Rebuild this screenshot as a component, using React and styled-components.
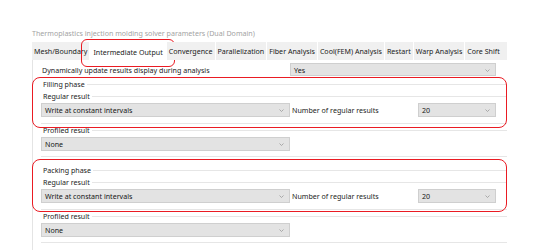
import React from 'react';
import styled, { createGlobalStyle } from 'styled-components';

const GlobalStyle = createGlobalStyle`
  html, body {
    margin: 0;
    background: #ffffff;
  }
  body {
    font-family: "Noto Sans", "Open Sans", sans-serif;
    font-size: 7.1px;
    color: #1c1c1c;
  }
`;

const Page = styled.div`
  width: 475px;
  padding: 27px 0 0 32px;
`;

const Title = styled.div`
  height: 12px;
  line-height: 12px;
  color: #a3a3a3;
  margin-bottom: 3px;
  white-space: nowrap;
`;

const TabBar = styled.div`
  display: flex;
  gap: 1px;
  height: 18px;
  align-items: stretch;
`;

const Tab = styled.div`
  position: relative;
  display: flex;
  align-items: center;
  padding: 0 ${(p) => (p.$active ? 3 : 2)}px;
  margin-top: ${(p) => (p.$active ? 1 : 0)}px;
  background: ${(p) => (p.$active ? '#ffffff' : '#f0f0f0')};
  white-space: nowrap;
  color: #1a1a1a;
  flex: ${(p) => (p.$grow ? 1 : 'none')};

  ${(p) => p.$marked && `
    &::after {
      content: '';
      position: absolute;
      left: -9px;
      right: -9px;
      top: -4px;
      bottom: -7px;
      border: 1.8px solid #ea1b23;
      border-radius: 6px;
      pointer-events: none;
    }
  `}
`;

const Panel = styled.div`
  border-left: 1px solid #e4e4e4;
  padding: 1px 11px 0 8px;
  height: 190px;
`;

const Grid = styled.div`
  display: grid;
  grid-template-columns: 249px 128px 78px;
  align-items: center;
  height: ${(p) => p.$h || 16}px;
`;

const Label = styled.div`
  padding-left: ${(p) => (p.$indent ? 1 : 2)}px;
  white-space: nowrap;
  color: #1c1c1c;
`;

const SelectBox = styled.div`
  position: relative;
  height: ${(p) => p.$h || 14}px;
  box-sizing: border-box;
  border: 1px solid #cfcfcf;
  background: #e3e3e3;
  display: flex;
  align-items: center;
  padding-left: 3px;
  grid-column: ${(p) => p.$span || 'auto'};
  color: #161616;
`;

const Chevron = styled.svg`
  position: absolute;
  right: 5px;
  top: 50%;
  width: 5px;
  height: 3px;
  margin-top: -1px;
`;

const Select = ({ value, span, h }) => (
  <SelectBox $span={span} $h={h}>
    {value}
    <Chevron viewBox="0 0 5 3">
      <path d="M0.5 0.5 L2.5 2.5 L4.5 0.5" fill="none" stroke="#9a9a9a" strokeWidth="0.8" />
    </Chevron>
  </SelectBox>
);

const Section = styled.div`
  position: relative;
`;

const Highlight = styled.div`
  position: absolute;
  left: -9px;
  right: -11px;
  top: ${(p) => p.$top}px;
  height: ${(p) => p.$h}px;
  border: 1.8px solid #ea1b23;
  border-radius: 8px;
  pointer-events: none;
`;

const Legend = styled.div`
  display: flex;
  align-items: center;
  height: 12px;
  white-space: nowrap;
  margin-right: -11px;

  &::after {
    content: '';
    flex: 1;
    border-top: 1px solid #e6e6e6;
    margin-left: 2px;
  }
`;

const FieldRow = styled.div`
  display: grid;
  grid-template-columns: 249px 128px 78px;
  align-items: center;
  padding-top: 1px;
  padding-bottom: ${(p) => p.$pb || 6}px;
  border-bottom: 1px solid #e6e6e6;
  margin-right: -11px;
`;

const Phase = ({ name, markTop, markH }) => (
  <Section>
    <Highlight $top={markTop} $h={markH} />
    <Legend>
      <Label>{name}</Label>
    </Legend>
    <Legend>
      <Label>Regular result</Label>
    </Legend>
    <FieldRow>
      <Select value="Write at constant intervals" />
      <Label>Number of regular results</Label>
      <Select value="20" />
    </FieldRow>
    <Legend>
      <Label>Profiled result</Label>
    </Legend>
    <FieldRow $pb={5}>
      <Select value="None" />
    </FieldRow>
  </Section>
);

const tabs = [
  { name: 'Mesh/Boundary' },
  { name: 'Intermediate Output', active: true },
  { name: 'Convergence' },
  { name: 'Parallelization' },
  { name: 'Fiber Analysis' },
  { name: 'Cool(FEM) Analysis' },
  { name: 'Restart' },
  { name: 'Warp Analysis' },
  { name: 'Core Shift', grow: true },
];

const PhaseGap = styled.div`
  height: 7px;
`;

export default function App() {
  return (
    <>
      <GlobalStyle />
      <Page>
        <Title>Thermoplastics injection molding solver parameters (Dual Domain)</Title>
        <TabBar>
          {tabs.map((t) => (
            <Tab key={t.name} $active={t.active} $marked={t.active} $grow={t.grow}>
              {t.name}
            </Tab>
          ))}
        </TabBar>
        <Panel>
          <Grid $h={17}>
            <Label $indent>Dynamically update results display during analysis</Label>
            <Select value="Yes" span="2 / 4" h={13} />
          </Grid>
          <Phase name="Filling phase" markTop={-1} markH={49} />
          <PhaseGap />
          <Phase name="Packing phase" markTop={-5} markH={51} />
        </Panel>
      </Page>
    </>
  );
}
